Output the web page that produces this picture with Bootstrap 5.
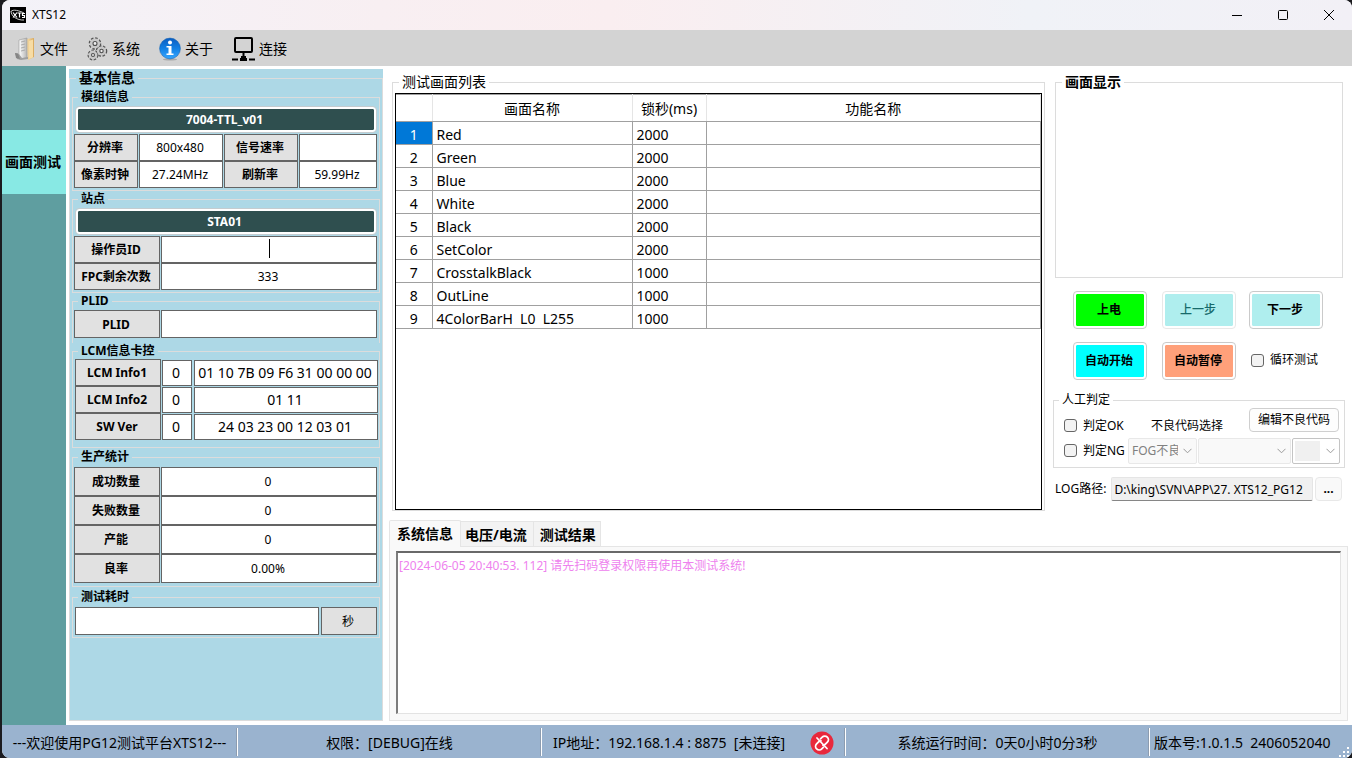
<!DOCTYPE html>
<html lang="zh-CN">
<head>
<meta charset="utf-8">
<meta name="viewport" content="width=device-width, initial-scale=1">
<title>XTS12</title>
<link href="https://cdn.jsdelivr.net/npm/bootstrap@5.3.0/dist/css/bootstrap.min.css" rel="stylesheet">
<style>
  body { font-family: "Noto Sans", "Noto Sans CJK SC", sans-serif; font-size: 12px; line-height: 16px; color: #000; background: #1b1b1f; padding-left: 2px; }
  .app-window { min-height: 100vh; background: #fff; border-radius: 8px; overflow: hidden; }
  .title-bar { height: 30px; background: linear-gradient(90deg, #f3f2f8 0, #f8eff2 28%, #faeef0 45%, #f0f2f7 76%, #f2f0f6 100%); }
  .app-name { margin-left: 6px; }
  .win-btn { width: 46px; height: 30px; padding: 0 0 2px; border: 0; background: none; }
  .menu-bar { height: 36px; background: #d3d3d3; font-size: 14px; gap: 19px; padding: 1px 12px 0; }
  .menu-bar a { color: #000; text-decoration: none; }
  .side-nav { width: 64px; flex: none; background: #5f9ea0; padding-top: 64px; }
  .side-nav a { height: 64px; background: #88e9e4; color: #000; font-size: 14px; font-weight: 700; text-decoration: none; padding-right: 2px; }

  /* group boxes */
  .group { border: 1px solid #dcdcdc; }
  .group > legend { float: none; width: auto; margin: 0 0 0 4px; padding: 0 3px; font-size: 12px; line-height: 16px; font-weight: 700; }
  .group.lg > legend { font-size: 14px; line-height: 18px; }
  .group.plain > legend { font-weight: 400; }
  .info-panel { width: 314px; flex: none; margin: 3px 0 4px 3px; background: #add8e6; }
  .info-panel .group { padding: 2px 2px 2px 1px; margin: 0 2px; }
  .info-panel .group.box-plid { padding: 1px 2px 5px 1px; }
  .info-panel .group.box-lcm { padding: 0 2px 7px 1px; margin-bottom: 1px; }
  .info-panel .group.box-stat { padding-bottom: 3px; margin-bottom: 2px; }
  .info-panel > .group > legend { margin: 0 0 2px 6px; }

  .banner { height: 25px; margin: 0 1px 2px 2px; border: 2px solid #fff; outline: 1px solid #c4ccd0; border-radius: 3px; background: #2f4f4f; background-clip: padding-box; color: #fff; font-weight: 700; line-height: 20px; padding: 0 3px 0 0; width: calc(100% - 3px); font-size: 12px; }
  .cells { display: grid; column-gap: 1px; }
  .c4 { grid-template-columns: 64px 84px 74px 1fr; }
  .c2 { grid-template-columns: 86px 1fr; }
  .c3 { grid-template-columns: 86px 30px 1fr; margin-left: 1px; margin-right: -1px; }
  .c3 input:nth-child(3n) { margin-left: 1px; }
  .ct { grid-template-columns: 1fr 56px; column-gap: 2px; margin-left: 1px; }
  .cells > *, .cells input { height: 27px; min-width: 0; border: 1px solid #646464; border-radius: 0; padding: 0 2px 0 0; text-align: center; font-size: 12px; line-height: 26px; background: #fff; color: #000; }
  .cells label { background: #e1e1e1; font-weight: 700; }
  .cells .holder { border: 0; padding: 0; position: relative; }
  .cells .holder input { width: 100%; }
  .caret-bar { position: absolute; left: 50%; top: 3px; width: 1px; height: 19px; background: #000; }
  .cells.c3 input { font-size: 14px; height: 26px; margin-top: 1px; }
  .cells.tall > * { height: 29px; line-height: 28px; }
  .cells.mid > * { height: 28px; line-height: 27px; }

  /* picture list */
  .list-group-box { margin: 7px 0 9px 9px; padding: 0 2px; }
  .list-group-box > legend { align-self: flex-start; margin-bottom: 2px; }
  .list-frame { border: 1px solid #000; background: #fff; }
  .pic-table { width: 100%; table-layout: fixed; border-collapse: collapse; font-size: 14px; }
  .pic-table th, .pic-table td { border: 1px solid #a0a0a0; height: 23px; padding: 3px 4px 0; line-height: 19px; font-weight: 400; }
  .pic-table tr > :first-child { text-align: center; border-left: 0; }
  .pic-table thead th { height: 27px; text-align: center; border-color: #a0a0a0 #e5e5e5; padding: 1px 0 0; }
  .pic-table .sel { background: #0078d7; color: #fff; }
  .col-no { width: 36px; }
  .col-name { width: 200px; }
  .col-ms { width: 74px; }

  /* log tabs */
  .log-area { margin: 0 4px 4px 6px; }
  .log-tabs { border: 0; font-size: 14px; }
  .log-tabs .nav-link { height: 25px; padding: 0 6px 0 4px; border: 1px solid #e5e5e5; border-bottom: 0; border-radius: 0; background: #f3f3f3; color: #000; font-weight: 700; line-height: 25px; margin: 0 -1px 0 0; }
  .log-tabs .nav-link.active { height: 27px; padding: 0 7px; background: #f9f9f9; color: #000; margin-bottom: -1px; border-color: #e5e5e5; line-height: 24px; border-radius: 2px 2px 0 0; }
  .log-tabs .nav-link:last-child { padding: 0 4px 0 6px; }
  .log-pane { border: 1px solid #e5e5e5; background: #f9f9f9; height: 175px; padding: 4px 6px 6px; }
  .log-box { width: 100%; height: 100%; display: block; resize: none; border: 1px solid #e3e3e3; border-top: 2px solid #696969; border-left: 2px solid #7c7c7c; border-radius: 0; background: #fff; color: #ee82ee; padding: 5px 1px; font-size: 12px; line-height: 16px; outline: 0; }

  /* right column */
  .right-col { width: 292px; flex: none; margin: 7px 7px 0 8px; }
  .preview { height: 205px; margin: 0 2px; }
  .group.preview > legend { margin-left: 6px; }
  .cmd { width: 74px; height: 38px; padding: 0 2px 0 0; border: 3px solid #fff; border-radius: 4px; outline: 1px solid #cacaca; outline-offset: -1px; font-size: 12px; font-weight: 700; line-height: 30px; color: #000; background-clip: padding-box; }
  .cmd:disabled { color: #176a6a; outline-color: #e8e8e8; font-weight: 500; }
  .cmd-green { background-color: #0f0; }
  .cmd-pale { background-color: #afeeee; }
  .cmd-cyan { background-color: #0ff; }
  .cmd-salmon { background-color: #ffa07a; }
  .cmds { display: grid; grid-template-columns: 89px 87px 74px; row-gap: 13px; padding: 13px 20px 0; align-items: center; }
  .tick { appearance: none; width: 13px; height: 13px; margin: 0; border: 1px solid #666; border-radius: 3px; background: #f3f3f3; flex: none; }
  .tick-label { gap: 6px; white-space: nowrap; }
  .cmds .tick-label { padding: 0 0 2px 2px; }
  .judge { margin-top: 12px; padding: 5px 4px 4px 9px; }
  .group.judge > legend { margin-left: -4px; }
  .judge-row { height: 25px; }
  .judge-row > label { flex: none; width: 65px; padding-left: 1px; }
  .code-title { margin-left: 23px; flex: 1; }
  .edit-btn { width: 90px; margin: -12px 1px 0 0; }
  .btn-win { padding: 0; height: 24px; border: 1px solid #cfcfcf; border-radius: 4px; background: #fdfdfd; font-size: 12px; line-height: 22px; color: #000; }
  .combo-row { flex: 1; display: grid; grid-template-columns: 69px 1fr 48px; column-gap: 1px; }
  .combo { --arrow: url("data:image/svg+xml,%3Csvg xmlns='http://www.w3.org/2000/svg' width='9' height='6' fill='none' stroke='%239a9a9a'%3E%3Cpath d='M.5.8l4 4 4-4'/%3E%3C/svg%3E"); appearance: none; height: 26px; padding: 0 18px 0 3px; border: 1px solid #e8e8e8; border-radius: 2px; font-size: 12px; line-height: 22px; color: #808080; opacity: 1; background: var(--arrow) no-repeat right 4px center #f9f9f9; }
  .combo.inner { border-color: #c4c4c4; background: var(--arrow) no-repeat right 4px center, linear-gradient(#f0f0f0, #f0f0f0) no-repeat 2px 2px / 25px 20px, #fff; }
  .log-row { margin-top: 9px; padding: 0 3px 0 2px; }
  .path-box { height: 24px; min-width: 0; margin: 0 2px 0 5px; padding: 0 2px; border: 1px solid #e5e5e5; border-bottom-color: #868686; border-radius: 2px; background: #f0f0f0; font-size: 12px; }
  .more-btn { width: 27px; background: #f9f9f9; border-color: #e8e8e8; font-weight: 700; }

  .status-bar { height: 33px; background: #9ab3cf; font-size: 14px; line-height: 20px; white-space: pre; position: relative; }
  .status-bar > div { height: 28px; padding-top: 2px; display: flex; align-items: center; justify-content: center; border-left: 1px solid #fff; box-shadow: -1px 0 #8c9cb0; }
  .status-bar > .seg-first { width: 235px; border: 0; box-shadow: none; }
  .seg-wide { flex: 1; }
  .status-bar > .seg-ver { width: 203px; padding-left: 4px; justify-content: flex-start; }
  .link-icon { margin-left: 25px; }
  .grip { position: absolute; right: 1px; bottom: 0; }
</style>
</head>
<body>
<div class="app-window d-flex flex-column">
  <header class="title-bar d-flex align-items-center">
    <svg class="ms-2" width="16" height="16" viewBox="0 0 16 16"><rect width="16" height="16" fill="#000"/><path d="M1 4.500C3 2 9 3.500 14 6M1 4c0 5 6 9.500 13 9" fill="none" stroke="#ccc" stroke-width="1"/><path d="M3 5.500l4 5m0-5l-4 5M7.500 6h4m-2 0v4.500M15 6.500h-2.500v2h2v2h-2.500" fill="none" stroke="#fff" stroke-width="1.200"/></svg>
    <span class="app-name flex-grow-1">XTS12</span>
    <button class="win-btn" aria-label="最小化"><svg width="10" height="10"><path d="M0 5.500h10" stroke="#000"/></svg></button>
    <button class="win-btn" aria-label="最大化"><svg width="10" height="10"><rect x=".5" y=".5" width="9" height="9" rx="1" fill="none" stroke="#000"/></svg></button>
    <button class="win-btn" aria-label="关闭"><svg width="10" height="10"><path d="M0 0l10 10M10 0L0 10" stroke="#000"/></svg></button>
  </header>

  <nav class="menu-bar d-flex align-items-center">
    <a href="#" class="d-flex align-items-center">
      <svg width="22" height="24" viewBox="0 0 22 24"><defs><linearGradient id="fd" x2="1"><stop stop-color="#fbe3b0"/><stop offset="1" stop-color="#d9a95c"/></linearGradient><linearGradient id="pg" x2="1"><stop stop-color="#fff"/><stop offset="1" stop-color="#b4b4b4"/></linearGradient></defs><path d="M12 2l8-1v19l-6 3z" fill="url(#fd)"/><path d="M15 4l4-1.500v18L15 22z" fill="#f7dca4"/><path d="M5 3l8-2v20l-8 1z" fill="url(#pg)" stroke="#999" stroke-width=".6"/><path d="M7 5l4-1M7 8l4-1M7 11l4-1M7 14l4-1" stroke="#aaa"/><path d="M1 16l4 1 3 4 6-1v2l-7 1-4-1z" fill="#a0a0a0"/><path d="M1 16l3 .5 2 5.500-4-1z" fill="#858585"/></svg><span class="ms-1">文件</span></a>
    <a href="#" class="d-flex align-items-center">
      <svg width="21" height="24" viewBox="0 0 21 24" fill="none"><g stroke="#555"><circle cx="8" cy="6.500" r="4.800" stroke-width="3" stroke-dasharray="2.200 1.500"/><circle cx="14.500" cy="14" r="4.300" stroke-width="3" stroke-dasharray="2.200 1.300"/><circle cx="6" cy="18" r="4" stroke-width="3" stroke-dasharray="2.200 1.200"/></g><g stroke="#c9c9c9" stroke-width="2.800"><circle cx="8" cy="6.500" r="3.700"/><circle cx="14.500" cy="14" r="3.200"/><circle cx="6" cy="18" r="3"/></g><g stroke="#505050" stroke-width="1.100" fill="#eee"><circle cx="8" cy="6.500" r="2"/><circle cx="14.500" cy="14" r="1.700"/><circle cx="6" cy="18" r="1.500"/></g></svg><span class="ms-1">系统</span></a>
    <a href="#" class="d-flex align-items-center">
      <svg width="22" height="24" viewBox="0 0 22 24"><defs><linearGradient id="inf" y2="1" x2="0"><stop stop-color="#0a5dc0"/><stop offset=".5" stop-color="#1280e4"/><stop offset="1" stop-color="#35a6ff"/></linearGradient></defs><ellipse cx="11" cy="22.500" rx="7" ry="1" fill="#aaa"/><circle cx="11" cy="11.500" r="10.400" fill="url(#inf)" stroke="#1565b5" stroke-width=".6"/><circle cx="11" cy="5.500" r="2" fill="#fff"/><path d="M7.500 9h5v7.500h2V18h-7v-1.500h2v-6h-2z" fill="#fff"/></svg><span class="ms-1">关于</span></a>
    <a href="#" class="d-flex align-items-center">
      <svg width="23" height="24" viewBox="0 0 23 24"><rect x="3" y="1" width="17" height="14" rx="1" fill="none" stroke="#000" stroke-width="2"/><path d="M11.500 15v5M0 22.500h6M17 22.500h6" stroke="#000" stroke-width="2"/><path d="M8 22.500h7M9 20.500h5" stroke="#000" stroke-width="3"/></svg><span class="ms-1">连接</span></a>
  </nav>

  <main class="d-flex flex-grow-1">
    <nav class="side-nav"><a href="#" class="d-flex align-items-center justify-content-center text-nowrap">画面测试</a></nav>

    <section class="info-panel d-flex">
      <fieldset class="group lg flex-grow-1 mx-0 p-0">
        <legend>基本信息</legend>
        <fieldset class="group">
          <legend>模组信息</legend>
          <button class="banner">7004-TTL_v01</button>
          <div class="cells c4">
            <label for="res">分辨率</label><input id="res" value="800x480" readonly>
            <label for="rate">信号速率</label><input id="rate" readonly>
            <label for="clk">像素时钟</label><input id="clk" value="27.24MHz" readonly>
            <label for="hz">刷新率</label><input id="hz" value="59.99Hz" readonly>
          </div>
        </fieldset>
        <fieldset class="group">
          <legend>站点</legend>
          <button class="banner">STA01</button>
          <div class="cells c2">
            <label for="op">操作员ID</label><div class="holder"><input id="op"><span class="caret-bar"></span></div>
            <label for="fpc">FPC剩余次数</label><input id="fpc" value="333" readonly>
          </div>
        </fieldset>
        <fieldset class="group box-plid border-bottom-0">
          <legend>PLID</legend>
          <div class="cells c2 mid"><label for="plid">PLID</label><input id="plid"></div>
        </fieldset>
        <fieldset class="group box-lcm">
          <legend>LCM信息卡控</legend>
          <div class="cells c3">
            <label for="l1">LCM Info1</label><input aria-label="LCM Info1 计数" value="0"><input id="l1" value="01 10 7B 09 F6 31 00 00 00">
            <label for="l2">LCM Info2</label><input aria-label="LCM Info2 计数" value="0"><input id="l2" value="01 11">
            <label for="sw">SW Ver</label><input aria-label="SW Ver 计数" value="0"><input id="sw" value="24 03 23 00 12 03 01">
          </div>
        </fieldset>
        <fieldset class="group box-stat">
          <legend>生产统计</legend>
          <div class="cells c2 tall">
            <label for="s1">成功数量</label><input id="s1" value="0" readonly>
            <label for="s2">失败数量</label><input id="s2" value="0" readonly>
            <label for="s3">产能</label><input id="s3" value="0" readonly>
            <label for="s4">良率</label><input id="s4" value="0.00%" readonly>
          </div>
        </fieldset>
        <fieldset class="group">
          <legend>测试耗时</legend>
          <div class="cells ct mid"><input id="cost" aria-label="测试耗时"><label for="cost" class="fw-normal">秒</label></div>
        </fieldset>
      </fieldset>
    </section>

    <div class="d-flex flex-column flex-fill overflow-hidden">
      <div class="d-flex flex-grow-1">
        <fieldset class="group lg plain list-group-box d-flex flex-column flex-grow-1">
          <legend>测试画面列表</legend>
          <div class="list-frame flex-grow-1">
            <table class="pic-table">
              <colgroup><col class="col-no"><col class="col-name"><col class="col-ms"><col></colgroup>
              <thead><tr><th></th><th>画面名称</th><th>锁秒(ms)</th><th>功能名称</th></tr></thead>
              <tbody>
                <tr><th class="sel">1</th><td>Red</td><td>2000</td><td></td></tr>
                <tr><th>2</th><td>Green</td><td>2000</td><td></td></tr>
                <tr><th>3</th><td>Blue</td><td>2000</td><td></td></tr>
                <tr><th>4</th><td>White</td><td>2000</td><td></td></tr>
                <tr><th>5</th><td>Black</td><td>2000</td><td></td></tr>
                <tr><th>6</th><td>SetColor</td><td>2000</td><td></td></tr>
                <tr><th>7</th><td>CrosstalkBlack</td><td>1000</td><td></td></tr>
                <tr><th>8</th><td>OutLine</td><td>1000</td><td></td></tr>
                <tr><th>9</th><td>4ColorBarH&nbsp; L0&nbsp; L255</td><td>1000</td><td></td></tr>
              </tbody>
            </table>
          </div>
        </fieldset>

        <aside class="right-col">
          <fieldset class="group lg preview"><legend>画面显示</legend></fieldset>
          <div class="cmds">
            <button class="cmd cmd-green">上电</button>
            <button class="cmd cmd-pale" disabled>上一步</button>
            <button class="cmd cmd-pale">下一步</button>
            <button class="cmd cmd-cyan">自动开始</button>
            <button class="cmd cmd-salmon">自动暂停</button>
            <label class="d-flex align-items-center tick-label"><input type="checkbox" class="tick">循环测试</label>
          </div>
          <fieldset class="group plain judge">
            <legend>人工判定</legend>
            <div class="d-flex align-items-center judge-row">
              <label class="d-flex align-items-center tick-label"><input type="checkbox" class="tick">判定OK</label>
              <span class="code-title">不良代码选择</span>
              <button class="btn-win edit-btn">编辑不良代码</button>
            </div>
            <div class="d-flex align-items-center judge-row">
              <label class="d-flex align-items-center tick-label"><input type="checkbox" class="tick">判定NG</label>
              <div class="combo-row">
                <select class="combo" aria-label="不良类别" disabled><option>FOG不良</option></select>
                <select class="combo" aria-label="不良代码" disabled><option></option></select>
                <select class="combo inner" aria-label="不良等级" disabled><option></option></select>
              </div>
            </div>
          </fieldset>
          <div class="d-flex align-items-center log-row">
            <label for="logp" class="text-nowrap">LOG路径:</label>
            <input id="logp" class="path-box flex-grow-1" value="D:\king\SVN\APP\27. XTS12_PG12">
            <button class="btn-win more-btn">...</button>
          </div>
        </aside>
      </div>

      <section class="log-area">
        <div class="nav nav-tabs log-tabs align-items-end" role="tablist">
          <button class="nav-link active" role="tab">系统信息</button>
          <button class="nav-link" role="tab">电压/电流</button>
          <button class="nav-link" role="tab">测试结果</button>
        </div>
        <div class="log-pane"><textarea class="log-box" readonly aria-label="系统信息">[2024-06-05 20:40:53. 112] 请先扫码登录权限再使用本测试系统!</textarea></div>
      </section>
    </div>
  </main>

  <footer class="status-bar d-flex align-items-center">
    <div class="seg-first">---欢迎使用PG12测试平台XTS12---</div>
    <div class="seg-wide">权限：[DEBUG]在线</div>
    <div class="seg-wide">IP地址：192.168.1.4 : 8875&nbsp; [未连接]<svg class="link-icon" width="24" height="24" viewBox="0 0 24 24"><circle cx="12" cy="12" r="11.500" fill="#e8283c"/><g fill="none" stroke="#fff" stroke-width="1.800" stroke-linecap="round"><path d="M10.500 7.800l1.700-1.600a3.600 3.600 0 0 1 5.200 5l-2 2a3.500 3.500 0 0 1-2.400 1"/><path d="M13.500 16.200l-1.700 1.600a3.600 3.600 0 0 1-5.200-5l2-2a3.500 3.500 0 0 1 2.400-1"/><path d="M7 7l10 10.500"/></g></svg></div>
    <div class="seg-wide">系统运行时间：0天0小时0分3秒</div>
    <div class="seg-ver">版本号:1.0.1.5&nbsp; 2406052040</div>
    <svg class="grip" width="12" height="12" fill="#fff"><path d="M8 1h2v2H8zM8 5h2v2H8zM4 5h2v2H4zM8 9h2v2H8zM4 9h2v2H4zM0 9h2v2H0z"/></svg>
  </footer>
</div>
<script src="https://cdn.jsdelivr.net/npm/bootstrap@5.3.0/dist/js/bootstrap.bundle.min.js"></script>
</body>
</html>
